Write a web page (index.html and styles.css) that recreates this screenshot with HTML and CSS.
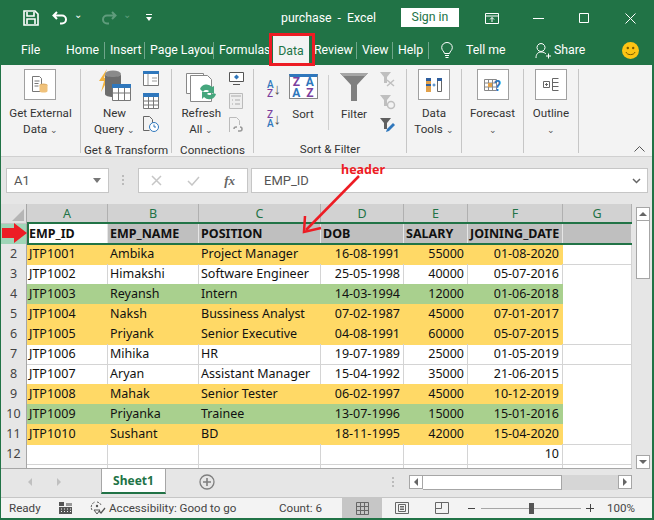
FILE: index.html
```html
<!DOCTYPE html>
<html lang="en">
  <head>
    <title>purchase - Excel</title>
    <link rel="stylesheet" href="styles.css">
  </head>
  <body>
    <div class="window">
      <!-- Title bar -->
      <div class="title-bar">
        <svg class="qat-save" width="16" height="16" viewBox="0 0 16 16"><path d="M1 1h11l3 3v11H1z M4 2v4h7V2 M4 14v-5h8v5" fill="none" stroke="#fff" stroke-width="1.6"/></svg>
        <svg class="qat-undo" width="16" height="14" viewBox="0 0 16 14"><path d="M5 1L1.500 4.500 5 8 M2 4.500h8a4 4 0 0 1 0 8H8" fill="none" stroke="#fff" stroke-width="2"/></svg>
        <span class="qat-chevron">⌄</span>
        <svg class="qat-redo" width="16" height="14" viewBox="0 0 16 14"><path d="M11 1l3.500 3.500L11 8 M14 4.500H6a4 4 0 0 0 0 8h2" fill="none" stroke="#5f9c7c" stroke-width="2"/></svg>
        <span class="qat-chevron dim">⌄</span>
        <svg class="qat-custom" width="6" height="8" viewBox="0 0 6 8"><path d="M0 0h6v1H0z M0 3h6L3 7z" fill="#fff"/></svg>
        <span class="doc-title">purchase &nbsp;-&nbsp; Excel</span>
        <span class="sign-in">Sign in</span>
        <svg class="win-display" width="14" height="11" viewBox="0 0 14 11"><path d="M.5.500h13v10H.5z M.5 3h13 M7 9V4.500 M5 6.500l2-2 2 2" fill="none" stroke="#fff"/></svg>
        <svg class="win-min" width="11" height="11" viewBox="0 0 11 11"><path d="M0 5.500h11" stroke="#fff"/></svg>
        <svg class="win-max" width="10" height="10" viewBox="0 0 10 10"><path d="M.5.500h9v9h-9z" fill="none" stroke="#fff"/></svg>
        <svg class="win-close" width="11" height="11" viewBox="0 0 11 11"><path d="M.5.500l10 10 M10.500.500l-10 10" stroke="#fff"/></svg>
      </div>

      <!-- Tabs -->
      <div class="tab-row">
        <span class="tab tab-file">File</span>
        <span class="tab tab-home">Home</span>
        <span class="tab tab-insert">Insert</span>
        <span class="tab tab-layout">Page Layou</span>
        <span class="tab tab-formulas">Formulas</span>
        <span class="tab tab-data">Data</span>
        <span class="tab tab-review">Review</span>
        <span class="tab tab-view">View</span>
        <span class="tab tab-help">Help</span>
        <svg class="tab-bulb" width="12" height="17" viewBox="0 0 12 17"><path d="M3.500 11.500C3 9 .7 8.500.7 5.500a5.300 5 0 0 1 10.600 0c0 3-2.300 3.500-2.800 6z M4 13.500h4 M4.500 15.500h3" fill="none" stroke="#fff"/></svg>
        <span class="tell-me">Tell me</span>
        <svg class="share-icon" width="16" height="17" viewBox="0 0 16 17"><path d="M1 16c0-4 2-6 5-6s4 1 5 2 M6 1.500a4 4 0 1 0 .01 0z M11 14h5 M13.500 11.500v5" fill="none" stroke="#fff"/></svg>
        <span class="share">Share</span>
        <svg class="smiley" width="17" height="17" viewBox="0 0 17 17"><circle cx="8.500" cy="8.500" r="8.500" fill="#fdc414"/><circle cx="5.800" cy="6" r="1.200" fill="#7a5a00"/><circle cx="11.200" cy="6" r="1.200" fill="#7a5a00"/><path d="M4 10c1 3.500 8 3.500 9 0" fill="none" stroke="#7a5a00"/></svg>
      </div>

      <!-- Ribbon -->
      <div class="ribbon">
        <div class="group group-external">
          <div class="group-body">
            <div class="big-btn">
              <div class="icon-box">
                <svg width="16" height="17" viewBox="0 0 16 17"><path d="M.5.500h7l2 2v13H.5z" fill="#fff" stroke="#777"/><path d="M2.500 5h5M2.500 7.500h4M2.500 10h4" stroke="#777"/><ellipse cx="11.500" cy="9" rx="4" ry="1.600" fill="#e2b36d"/><path d="M7.500 9v6c0 2 8 2 8 0V9" fill="#f0c27b"/></svg>
              </div>
              <span>Get External</span>
              <span>Data <i class="chev">⌄</i></span>
            </div>
          </div>
          <div class="group-label"></div>
        </div>

        <div class="group group-transform">
          <div class="group-body">
            <div class="big-btn new-query">
              <svg class="query-icon" width="33" height="33" viewBox="0 0 33 33">
                <path d="M9 0L1 12h5l-3 11 8-14H6z" fill="#f3b33d"/>
                <ellipse cx="15" cy="5" rx="8" ry="3.500" fill="#8a8a8a"/>
                <path d="M7 5v20c0 4 16 4 16 0V5c0 4-16 4-16 0z" fill="#6d6d6d"/>
                <path d="M14.500 16.500h18v15h-18z" fill="#fff" stroke="#777"/>
                <path d="M14 15h19v4H14z" fill="#2f77bc"/>
                <path d="M14.500 24h18M20.500 19v12M26.500 19v12" stroke="#777"/>
              </svg>
              <span>New</span>
              <span>Query <i class="chev">⌄</i></span>
            </div>
            <div class="small-col">
              <svg width="16" height="15" viewBox="0 0 16 15"><path d="M.5.500h15v14H.5z" fill="#fff" stroke="#777"/><path d="M0 0h16v3H0z" fill="#2f77bc"/><path d="M9 7h5M9 10h5M5 3v11" stroke="#999"/></svg>
              <svg width="16" height="16" viewBox="0 0 16 16"><path d="M.5.500h15v15H.5z" fill="#fff" stroke="#777"/><path d="M0 0h16v4H0z" fill="#2f77bc"/><path d="M.5 8h15M.5 12h15M5.500 4v12M10.500 4v12" stroke="#777"/></svg>
              <svg width="16" height="16" viewBox="0 0 16 16"><path d="M.5.500h6l3 3v4M.5.500v14h6" fill="none" stroke="#666"/><circle cx="11" cy="11" r="4.500" fill="#fff" stroke="#2f77bc"/><path d="M11 8.500V11h2" fill="none" stroke="#2f77bc"/></svg>
            </div>
          </div>
          <div class="group-label">Get &amp; Transform</div>
        </div>

        <div class="group group-connect">
          <div class="group-body">
            <div class="big-btn refresh">
              <svg class="refresh-icon" width="31" height="31" viewBox="0 0 31 31">
                <path d="M.5 1.500h17l0 20H.5z" fill="#fff" stroke="#888"/>
                <path d="M4.500 3.500h17l4 4v22h-21z" fill="#fff" stroke="#888"/>
                <path d="M14 17a7 7 0 0 1 12-2l2-1v7h-7l2-2a4 4 0 0 0-6 1z M30 22a7 7 0 0 1-12 3l-2 2v-7h7l-2 2a4 4 0 0 0 6-1z" fill="#45a67d"/>
              </svg>
              <span>Refresh</span>
              <span>All <i class="chev">⌄</i></span>
            </div>
            <div class="small-col small-col-conn">
              <svg width="15" height="13" viewBox="0 0 15 13"><path d="M.5.500h14v9H.5z M4 12.500h7" fill="#fff" stroke="#555"/><path d="M7.500 2.500l2.500 2.500-2.500 2.500L5 5z" fill="#2f77bc"/></svg>
              <svg width="14" height="16" viewBox="0 0 14 16"><path d="M.5.500h13v15H.5z" fill="#eee" stroke="#bbb"/><path d="M2 2h10v2H2z" fill="#ccc"/><path d="M6 7h5M6 11h5M3 7h1M3 11h1" stroke="#aaa"/></svg>
              <svg width="14" height="16" viewBox="0 0 14 16"><path d="M.5 15V.500h7l3 3V8" fill="none" stroke="#bbb"/><path d="M5 12a2 2 0 0 1 2-2h1M9 14h2a2 2 0 0 0 0-4" fill="none" stroke="#999" stroke-width="1.500"/></svg>
            </div>
          </div>
          <div class="group-label">Connections</div>
        </div>

        <div class="group group-sort">
          <div class="group-body">
            <div class="sort-col">
              <div class="sort-mini">
                <span class="az"><b class="blue">A</b><b class="purple">Z</b></span><span class="sort-arrow">↓</span>
              </div>
              <div class="sort-mini">
                <span class="az"><b class="purple">Z</b><b class="blue">A</b></span><span class="sort-arrow">↓</span>
              </div>
            </div>
            <div class="big-btn sort-btn">
              <div class="sort-icon">
                <span class="az-col"><b class="purple">Z</b><b class="blue">A</b></span>
                <span class="az-col"><b class="blue">A</b><b class="purple">Z</b></span>
              </div>
              <span>Sort</span>
            </div>
            <div class="inner-sep"></div>
            <div class="big-btn filter-btn">
              <svg class="filter-icon" width="28" height="28" viewBox="0 0 28 28"><path d="M0 0h28L17 12v16h-6V12z" fill="#7f7f7f"/><path d="M0 0h28l-3 3H3z" fill="#a6a6a6"/></svg>
              <span>Filter</span>
            </div>
            <div class="small-col small-col-filter">
              <svg width="16" height="15" viewBox="0 0 16 15"><path d="M0 0h11L7 5v6H4V5z" fill="#bfbfbf"/><path d="M7 8l7 6M14 8l-7 6" stroke="#bfbfbf" stroke-width="1.500"/></svg>
              <svg width="16" height="15" viewBox="0 0 16 15"><path d="M0 0h11L7 5v6H4V5z" fill="#bfbfbf"/><circle cx="11" cy="10" r="3.500" fill="none" stroke="#bfbfbf" stroke-width="1.500"/></svg>
              <svg width="16" height="15" viewBox="0 0 16 15"><path d="M0 0h11L7 5v6H4V5z" fill="#5f5f5f"/><path d="M6 14l1-3 6-6 2 2-6 6z" fill="#2f77bc"/></svg>
            </div>
          </div>
          <div class="group-label">Sort &amp; Filter</div>
        </div>

        <div class="group group-tools">
          <div class="group-body">
            <div class="big-btn">
              <div class="icon-box">
                <svg width="16" height="14" viewBox="0 0 16 14"><path d="M0 0h5v14H0z" fill="#e2a24c"/><path d="M0 0h5v3H0zM0 6h5v2H0z" fill="#2f5f9e"/><path d="M11.500.500h4v13h-4z" fill="#fff" stroke="#666"/><path d="M11 0h5v3h-5z" fill="#2f5f9e"/><path d="M6.500 7h3M8 5.500v3" stroke="#2f77bc"/></svg>
              </div>
              <span>Data</span>
              <span>Tools <i class="chev">⌄</i></span>
            </div>
          </div>
          <div class="group-label"></div>
        </div>

        <div class="group group-forecast">
          <div class="group-body">
            <div class="big-btn">
              <div class="icon-box">
                <svg width="13" height="12" viewBox="0 0 13 12"><path d="M.5.500h12v11H.5zM.5 4h12M.5 8h12M4.500.500v11M8.500.500v11" fill="none" stroke="#888"/><path d="M4 4h4v4H4z" fill="#e2a24c"/></svg>
                <span class="help-mark">?</span>
              </div>
              <span>Forecast</span>
              <span><i class="chev">⌄</i></span>
            </div>
          </div>
          <div class="group-label"></div>
        </div>

        <div class="group group-outline">
          <div class="group-body">
            <div class="big-btn">
              <div class="icon-box">
                <svg width="16" height="13" viewBox="0 0 16 13"><path d="M.5 3.500h6v6h-6zM2 6.500h3M3.500 5v3M9.500.500h6M9.500 4.500h6M9.500 8.500h6M9.500 12.500h6M9.500.500v12" fill="none" stroke="#666"/></svg>
              </div>
              <span>Outline</span>
              <span><i class="chev">⌄</i></span>
            </div>
          </div>
          <div class="group-label"></div>
        </div>

        <svg class="ribbon-collapse" width="11" height="6" viewBox="0 0 11 6"><path d="M.5 5.500l5-5 5 5" fill="none" stroke="#555"/></svg>
      </div>

      <!-- Formula bar -->
      <div class="formula-bar">
        <div class="name-box"><span>A1</span><i class="name-caret"></i></div>
        <div class="formula-dots"></div>
        <div class="fx-box">
          <svg width="11" height="11" viewBox="0 0 11 11"><path d="M1 1l9 9M10 1l-9 9" stroke="#c6c6c6" stroke-width="1.500"/></svg>
          <svg width="13" height="10" viewBox="0 0 13 10"><path d="M1 5l4 4 7-8" fill="none" stroke="#c6c6c6" stroke-width="1.500"/></svg>
          <span class="fx">fx</span>
        </div>
        <div class="formula-input">
          <span>EMP_ID</span>
          <svg width="9" height="6" viewBox="0 0 9 6"><path d="M1 1l3.500 3.500L8 1" fill="none" stroke="#666" stroke-width="1.500"/></svg>
        </div>
      </div>

      <!-- Sheet -->
      <div class="sheet-area">
        <div class="sheet">
          <div class="row col-heads">
            <div class="row-head corner"><i></i></div>
            <div class="cell">A</div><div class="cell">B</div><div class="cell">C</div><div class="cell">D</div><div class="cell">E</div><div class="cell">F</div><div class="cell">G</div>
          </div>
          <div class="row head-row">
            <div class="row-head active">1</div>
            <div class="cell first">EMP_ID</div><div class="cell">EMP_NAME</div><div class="cell">POSITION</div><div class="cell">DOB</div><div class="cell">SALARY</div><div class="cell">JOINING_DATE</div><div class="cell"></div>
          </div>
          <div class="row orange">
            <div class="row-head">2</div>
            <div class="cell">JTP1001</div><div class="cell">Ambika</div><div class="cell">Project Manager</div><div class="cell num">16-08-1991</div><div class="cell num">55000</div><div class="cell num">01-08-2020</div><div class="cell"></div>
          </div>
          <div class="row">
            <div class="row-head">3</div>
            <div class="cell">JTP1002</div><div class="cell">Himakshi</div><div class="cell">Software Engineer</div><div class="cell num">25-05-1998</div><div class="cell num">40000</div><div class="cell num">05-07-2016</div><div class="cell"></div>
          </div>
          <div class="row green">
            <div class="row-head">4</div>
            <div class="cell">JTP1003</div><div class="cell">Reyansh</div><div class="cell">Intern</div><div class="cell num">14-03-1994</div><div class="cell num">12000</div><div class="cell num">01-06-2018</div><div class="cell"></div>
          </div>
          <div class="row orange">
            <div class="row-head">5</div>
            <div class="cell">JTP1004</div><div class="cell">Naksh</div><div class="cell">Bussiness Analyst</div><div class="cell num">07-02-1987</div><div class="cell num">45000</div><div class="cell num">07-01-2017</div><div class="cell"></div>
          </div>
          <div class="row orange">
            <div class="row-head">6</div>
            <div class="cell">JTP1005</div><div class="cell">Priyank</div><div class="cell">Senior Executive</div><div class="cell num">04-08-1991</div><div class="cell num">60000</div><div class="cell num">05-07-2015</div><div class="cell"></div>
          </div>
          <div class="row">
            <div class="row-head">7</div>
            <div class="cell">JTP1006</div><div class="cell">Mihika</div><div class="cell">HR</div><div class="cell num">19-07-1989</div><div class="cell num">25000</div><div class="cell num">01-05-2019</div><div class="cell"></div>
          </div>
          <div class="row">
            <div class="row-head">8</div>
            <div class="cell">JTP1007</div><div class="cell">Aryan</div><div class="cell">Assistant Manager</div><div class="cell num">15-04-1992</div><div class="cell num">35000</div><div class="cell num">21-06-2015</div><div class="cell"></div>
          </div>
          <div class="row orange">
            <div class="row-head">9</div>
            <div class="cell">JTP1008</div><div class="cell">Mahak</div><div class="cell">Senior Tester</div><div class="cell num">06-02-1997</div><div class="cell num">45000</div><div class="cell num">10-12-2019</div><div class="cell"></div>
          </div>
          <div class="row green">
            <div class="row-head">10</div>
            <div class="cell">JTP1009</div><div class="cell">Priyanka</div><div class="cell">Trainee</div><div class="cell num">13-07-1996</div><div class="cell num">15000</div><div class="cell num">15-01-2016</div><div class="cell"></div>
          </div>
          <div class="row orange">
            <div class="row-head">11</div>
            <div class="cell">JTP1010</div><div class="cell">Sushant</div><div class="cell">BD</div><div class="cell num">18-11-1995</div><div class="cell num">42000</div><div class="cell num">15-04-2020</div><div class="cell"></div>
          </div>
          <div class="row">
            <div class="row-head">12</div>
            <div class="cell"></div><div class="cell"></div><div class="cell"></div><div class="cell"></div><div class="cell"></div><div class="cell num">10</div><div class="cell"></div>
          </div>
          <div class="row">
            <div class="row-head"></div>
            <div class="cell"></div><div class="cell"></div><div class="cell"></div><div class="cell"></div><div class="cell"></div><div class="cell"></div><div class="cell"></div>
          </div>
          <!-- Row selection outline -->
          <div class="row-select"></div>
        </div>

        <div class="v-scroll">
          <div class="scroll-btn"><i class="tri-up"></i></div>
          <div class="v-thumb"></div>
          <div class="v-track"></div>
          <div class="scroll-btn"><i class="tri-down"></i></div>
        </div>
      </div>

      <!-- Sheet tabs -->
      <div class="sheet-tabs">
        <i class="nav-tri left"></i>
        <i class="nav-tri right"></i>
        <div class="sheet-tab">Sheet1</div>
        <svg class="add-sheet" width="16" height="16" viewBox="0 0 16 16"><circle cx="8" cy="8" r="7" fill="none" stroke="#7f7f7f" stroke-width="1.300"/><path d="M8 4v8M4 8h8" stroke="#7f7f7f" stroke-width="1.600"/></svg>
        <div class="tab-dots"></div>
        <div class="h-scroll">
          <div class="scroll-btn"><i class="tri-left"></i></div>
          <div class="h-thumb"></div>
          <div class="h-track"></div>
          <div class="scroll-btn"><i class="tri-right"></i></div>
        </div>
      </div>

      <!-- Status bar -->
      <div class="status-bar">
        <span class="status-ready">Ready</span>
        <svg class="status-cells" width="13" height="12" viewBox="0 0 13 12"><path d="M0 0h5v4H0z" fill="#555"/><path d="M0 5h13v7H0z" fill="#555"/><path d="M2 7h1M5 7h1M8 7h1M11 7h1M2 9.500h1M5 9.500h1M8 9.500h1M11 9.500h1" stroke="#f3f3f3"/><path d="M7 1h6v3H7z" fill="#999"/></svg>
        <svg class="status-access" width="16" height="14" viewBox="0 0 16 14"><path d="M2 9a5.500 5.500 0 0 1 3-8M7 1a5 5 0 0 1 4 3" fill="none" stroke="#555" stroke-dasharray="2 1"/><circle cx="7" cy="5" r="1.200" fill="#555"/><path d="M7 13l-3-4h6z" fill="none" stroke="#555"/><path d="M9 10l2 2 4-5" fill="none" stroke="#555" stroke-width="1.300"/></svg>
        <span class="status-text">Accessibility: Good to go</span>
        <span class="status-count">Count: 6</span>
        <div class="view-btn on"><svg width="13" height="13" viewBox="0 0 13 13"><path d="M.5.500h12v12H.5zM4.500.500v12M8.500.500v12M.5 4.500h12M.5 8.500h12" fill="none" stroke="#666"/></svg></div>
        <div class="view-btn"><svg width="14" height="12" viewBox="0 0 14 12"><path d="M.5.500h13v11H.5zM3.500 2.500h7v7h-7zM5 4.500h4M5 6h4M5 7.500h4" fill="none" stroke="#666"/></svg></div>
        <div class="view-btn"><svg width="14" height="12" viewBox="0 0 14 12"><path d="M.5.500h13v11H.5zM.5 6.500h6M6.500.500v6" fill="none" stroke="#666"/></svg></div>
        <div class="zoom-minus"></div>
        <div class="zoom-slider"><i></i></div>
        <div class="zoom-plus"></div>
        <span class="zoom-value">100%</span>
      </div>

      <!-- Annotations drawn on the screenshot -->
      <div class="mark-data"></div>
      <span class="mark-header">header</span>
      <svg class="mark-arrows" width="654" height="520" viewBox="0 0 654 520">
        <path d="M359 176L306 230" stroke="#ed1c24" stroke-width="2.500"/>
        <path d="M305 216L304 232 321 228" fill="none" stroke="#ed1c24" stroke-width="2.500"/>
        <path d="M2 228h12v-5l13 10-13 10v-5H2z" fill="#ed1c24"/>
      </svg>
    </div>
  </body>
</html>
```

FILE: styles.css
```css
/* ===== Page ===== */
body {
  margin: 0;
  font-family: "Roboto", "Noto Sans", sans-serif;
  font-size: 11.6px;
  color: #333;
}

.window {
  position: relative;
  width: 654px;
  height: 520px;
  box-sizing: border-box;
  overflow: hidden;
  border: 1px solid #217346;
  border-width: 0 2px 2px 1px;
  background: #e6e6e6;
  display: flex;
  flex-direction: column;
}

/* ===== Title bar ===== */
.title-bar {
  height: 36px;
  flex: none;
  margin-right: -2px;
  background: #217346;
  color: #fff;
  display: flex;
  align-items: center;
  font-size: 12.3px;
}

.qat-save { margin-left: 22px; }
.qat-undo { margin-left: 13px; }
.qat-redo { margin-left: 19px; }
.qat-custom { margin-left: 15px; }

.qat-chevron {
  width: 8px;
  margin-left: 6px;
  margin-top: -6px;
  font-size: 10px;
  line-height: 1;
}

.qat-chevron.dim { color: #5f9c7c; }

.doc-title {
  margin-left: 129px;
  width: 120px;
  white-space: nowrap;
}

.sign-in {
  width: 58px;
  height: 19px;
  line-height: 19px;
  margin-top: -2px;
  background: #fff;
  color: #217346;
  text-align: center;
}

.win-display { margin-left: 26px; }
.win-min { margin-left: 34px; }
.win-max { margin-left: 35px; }
.win-close { margin-left: 36px; }

/* ===== Tabs ===== */
.tab-row {
  height: 29px;
  flex: none;
  margin-right: -2px;
  background: #217346;
  color: #fff;
  display: flex;
  align-items: center;
  font-size: 12.3px;
  line-height: 17px;
}

.tab { white-space: nowrap; }
.tab-file { margin-left: 20px; width: 45px; }
.tab-home { width: 38px; border-right: 1px solid #6fa58a; }
.tab-insert { margin-left: 5px; width: 34px; border-right: 1px solid #6fa58a; }
.tab-layout { margin-left: 5px; width: 63px; overflow: hidden; border-right: 1px solid #6fa58a; }
.tab-formulas { margin-left: 5px; width: 54px; }

.tab-data {
  width: 36px;
  height: 29px;
  line-height: 31px;
  box-sizing: border-box;
  background: #f3f3f3;
  color: #217346;
  text-align: center;
}

.tab-review { margin-left: 5px; width: 42px; border-right: 1px solid #6fa58a; }
.tab-view { margin-left: 5px; width: 30px; border-right: 1px solid #6fa58a; }
.tab-help { margin-left: 5px; width: 30px; border-right: 1px solid #6fa58a; }
.tab-bulb { margin-left: 12px; }
.tell-me { margin-left: 13px; width: 38px; white-space: nowrap; }
.share-icon { margin-left: 31px; }
.share { margin-left: 3px; width: 30px; }
.smiley { margin-left: 38px; }

/* ===== Ribbon ===== */
.ribbon {
  position: relative;
  height: 92px;
  flex: none;
  box-sizing: border-box;
  background: #f3f3f3;
  border-bottom: 1px solid #d0d0d0;
  display: flex;
  padding-top: 4px;
  line-height: 16px;
}

.group {
  display: flex;
  flex-direction: column;
  box-sizing: border-box;
  height: 84px;
  border-right: 1px solid #c6c6c6;
}

.group-external { width: 80px; }
.group-transform { width: 91px; }
.group-connect { width: 82px; }
.group-sort { width: 153px; }
.group-tools { width: 55px; }
.group-forecast { width: 62px; }
.group-outline { width: 55px; }

.group-body {
  flex: 1;
  display: flex;
  justify-content: center;
}

.group-label {
  height: 16px;
  line-height: 24px;
  text-align: center;
  white-space: nowrap;
}

.big-btn {
  display: flex;
  flex-direction: column;
  align-items: center;
  white-space: nowrap;
}

.icon-box {
  width: 32px;
  height: 31px;
  box-sizing: border-box;
  margin-bottom: 5px;
  background: #fff;
  border: 1px solid #a0a0a0;
  display: flex;
  align-items: center;
  justify-content: center;
}

.chev {
  font-style: normal;
  font-size: 9px;
  color: #555;
}

.new-query { width: 46px; margin-left: 10px; }
.query-icon { margin-bottom: 3px; }

.small-col {
  width: 16px;
  margin: 2px 12px 0 5px;
  display: flex;
  flex-direction: column;
  gap: 7px;
}

.refresh { width: 44px; margin-left: 8px; }
.refresh-icon { margin: 3px 0 2px; }
.small-col-conn { margin: 3px 9px 0 6px; gap: 8px; }

.sort-col {
  display: flex;
  flex-direction: column;
  gap: 8px;
  margin: 9px 7px 0 12px;
}

.sort-mini {
  display: flex;
  align-items: center;
  height: 22px;
}

.az {
  display: flex;
  flex-direction: column;
  font-size: 10px;
  line-height: 9.500px;
}

.az b { font-weight: 500; }
.blue { color: #2f77bc; }
.purple { color: #7b3f9e; }

.sort-arrow {
  font-size: 15px;
  color: #555;
}

.sort-btn { width: 30px; }

.sort-icon {
  width: 29px;
  height: 25px;
  margin: 5px 0 7px;
  box-sizing: border-box;
  background: #fff;
  border: 1px solid #888;
  border-top: 3px solid #2f77bc;
  display: flex;
  line-height: 10.500px;
  font-size: 12px;
}

.az-col {
  flex: 1;
  display: flex;
  flex-direction: column;
  align-items: center;
}

.inner-sep {
  width: 1px;
  height: 55px;
  margin: 6px 11px 0 10px;
  background: #d0d0d0;
}

.filter-btn { width: 28px; }
.filter-icon { margin: 4px 0 5px; }
.small-col-filter { margin: 3px 9px 0 12px; gap: 8px; }

.help-mark {
  margin: 2px 0 0 -3px;
  font-size: 14px;
  line-height: 14px;
  font-weight: bold;
  color: #2f77bc;
}

.ribbon-collapse {
  position: absolute;
  right: 7px;
  bottom: 4px;
}

/* ===== Formula bar ===== */
.formula-bar {
  height: 47px;
  flex: none;
  box-sizing: border-box;
  padding: 11px 0 11px 5px;
  display: flex;
  font-size: 13px;
  color: #555;
}

.name-box,
.fx-box,
.formula-input {
  box-sizing: border-box;
  background: #fff;
  border: 1px solid #c6c6c6;
  display: flex;
  align-items: center;
}

.name-box {
  width: 103px;
  padding: 0 7px;
  justify-content: space-between;
}

.name-caret {
  border: 4px solid transparent;
  border-top: 5px solid #777;
  border-bottom: 0;
}

.formula-dots {
  width: 3px;
  height: 10px;
  margin: 7px 13px 0 13px;
  border-left: 2px dotted #bbb;
  box-sizing: border-box;
}

.fx-box {
  width: 110px;
  padding: 0 12px;
  justify-content: space-between;
  margin-right: 3px;
}

.fx {
  font-family: "Liberation Serif", serif;
  font-style: italic;
  font-weight: bold;
  color: #666;
}

.formula-input {
  width: 397px;
  padding: 0 6px 0 12px;
  justify-content: space-between;
}

/* ===== Sheet ===== */
.sheet-area {
  height: 265px;
  flex: none;
  display: flex;
}

.sheet {
  position: relative;
  width: 631px;
  height: 265px;
  overflow: hidden;
  background: #fff;
  border-bottom: 1px solid #a6a6a6;
  box-sizing: border-box;
}

.row {
  display: grid;
  grid-template-columns: 26px 81px 91px 122px 83px 64px 95px 69px;
  height: 20px;
  line-height: 20px;
  font-family: "Noto Sans", sans-serif;
  font-size: 12.5px;
  color: #111;
}

.cell {
  box-sizing: border-box;
  padding: 0 2px;
  white-space: nowrap;
  overflow: hidden;
  border-right: 1px solid #d4d4d4;
  border-bottom: 1px solid #d4d4d4;
}

.num { text-align: right; padding-right: 3px; }

.row-head {
  box-sizing: border-box;
  background: #e6e6e6;
  border-right: 1px solid #a6a6a6;
  border-bottom: 1px solid #c6c6c6;
  text-align: center;
  color: #444;
}

.corner {
  position: relative;
  background: #e0e0e0;
}

.corner i {
  position: absolute;
  right: 2px;
  bottom: 2px;
  border-left: 12px solid transparent;
  border-bottom: 12px solid #b5b5b5;
}

.col-heads .cell {
  background: #d2d2d2;
  text-align: center;
  color: #217346;
  border-right: 1px solid #b0b0b0;
}

.head-row .cell {
  background: #bfbfbf;
  font-weight: bold;
  border-right: 1px solid #e6e6e6;
  border-bottom: 0;
}

.head-row .cell.first { background: #fff; }
.head-row .active { background: #9fd5b7; color: #217346; }

.orange .cell,
.green .cell {
  border-color: transparent;
}

.orange .cell { background: #ffd966; }
.green .cell { background: #a9d08e; }

.orange .cell:last-child,
.green .cell:last-child {
  background: #fff;
  border-color: #d4d4d4;
}

.row-select {
  position: absolute;
  left: 26px;
  right: 0;
  top: 18px;
  height: 23px;
  box-sizing: border-box;
  border-top: 2px solid #217346;
  border-bottom: 2px solid #217346;
  border-left: 2px solid #217346;
}

/* ===== Scrollbars ===== */
.v-scroll {
  width: 14px;
  margin-left: 4px;
  padding-top: 3px;
  box-sizing: content-box;
  height: 262px;
  display: flex;
  flex-direction: column;
}

.scroll-btn {
  width: 14px;
  height: 14px;
  flex: none;
  box-sizing: border-box;
  background: #fff;
  border: 1px solid #a6a6a6;
  display: flex;
  align-items: center;
  justify-content: center;
}

.v-thumb {
  height: 58px;
  box-sizing: border-box;
  background: #fff;
  border: 1px solid #a6a6a6;
  border-top: 0;
}

.v-track { flex: 1; }

.tri-up { border: 4px solid transparent; border-bottom: 4px solid #666; border-top: 0; }
.tri-down { border: 4px solid transparent; border-top: 4px solid #666; border-bottom: 0; }
.tri-left { border: 4px solid transparent; border-right: 4px solid #666; border-left: 0; }
.tri-right { border: 4px solid transparent; border-left: 4px solid #666; border-right: 0; }

/* ===== Sheet tabs ===== */
.sheet-tabs {
  height: 29px;
  flex: none;
  box-sizing: border-box;
  border-bottom: 1px solid #c6c6c6;
  display: flex;
  align-items: flex-start;
}

.nav-tri {
  margin-top: 9px;
  border: 4px solid transparent;
  border-left: 0;
  border-right: 4px solid #c0c0c0;
}

.nav-tri.left { margin-left: 27px; }

.nav-tri.right {
  margin-left: 25px;
  border-right: 0;
  border-left: 4px solid #c0c0c0;
}

.sheet-tab {
  width: 65px;
  height: 25px;
  margin-left: 40px;
  box-sizing: border-box;
  background: #fff;
  border: 1px solid #a6a6a6;
  border-top: 0;
  border-bottom: 2px solid #217346;
  color: #217346;
  font-family: "Noto Sans", sans-serif;
  font-weight: bold;
  font-size: 12px;
  line-height: 23px;
  text-align: center;
}

.add-sheet { margin: 5px 0 0 33px; }

.tab-dots {
  width: 2px;
  height: 10px;
  margin: 8px 15px 0 177px;
  border-left: 2px dotted #bbb;
  box-sizing: border-box;
}

.h-scroll {
  display: flex;
  width: 223px;
  height: 15px;
  margin-top: 6px;
}

.h-thumb {
  width: 139px;
  box-sizing: border-box;
  background: #fff;
  border: 1px solid #a6a6a6;
  border-left: 0;
}

.h-track {
  flex: 1;
  background: #d6d6d6;
}

/* ===== Status bar ===== */
.status-bar {
  flex: 1;
  display: flex;
  align-items: center;
  background: #f3f3f3;
  color: #444;
  font-size: 11.6px;
}

.status-ready { margin-left: 8px; width: 50px; }
.status-access { margin-left: 18px; }
.status-text { margin-left: 3px; width: 129px; white-space: nowrap; }
.status-count { margin-left: 41px; width: 63px; }

.view-btn {
  width: 40px;
  height: 100%;
  display: flex;
  align-items: center;
  justify-content: center;
}

.view-btn.on { background: #c6c6c6; }

.zoom-minus {
  width: 7px;
  height: 1px;
  margin-left: 6px;
  background: #444;
}

.zoom-slider {
  position: relative;
  width: 100px;
  height: 1px;
  margin-left: 6px;
  background: #a6a6a6;
}

.zoom-slider i {
  position: absolute;
  left: 48px;
  top: -5px;
  width: 5px;
  height: 11px;
  background: #555;
}

.zoom-plus {
  width: 8px;
  height: 8px;
  margin-left: 5px;
  background:
    linear-gradient(#444, #444) center / 8px 1px no-repeat,
    linear-gradient(#444, #444) center / 1px 8px no-repeat;
}

.zoom-value { margin-left: 13px; }

/* ===== Annotations ===== */
.mark-data {
  position: absolute;
  left: 268px;
  top: 33px;
  width: 46px;
  height: 33px;
  box-sizing: border-box;
  border: 3px solid #ed1c24;
}

.mark-header {
  position: absolute;
  left: 340px;
  top: 161px;
  color: #ed1c24;
  font-family: "Noto Sans", sans-serif;
  font-weight: bold;
  font-size: 12.5px;
}

.mark-arrows {
  position: absolute;
  left: -1px;
  top: 0;
  pointer-events: none;
}
```
